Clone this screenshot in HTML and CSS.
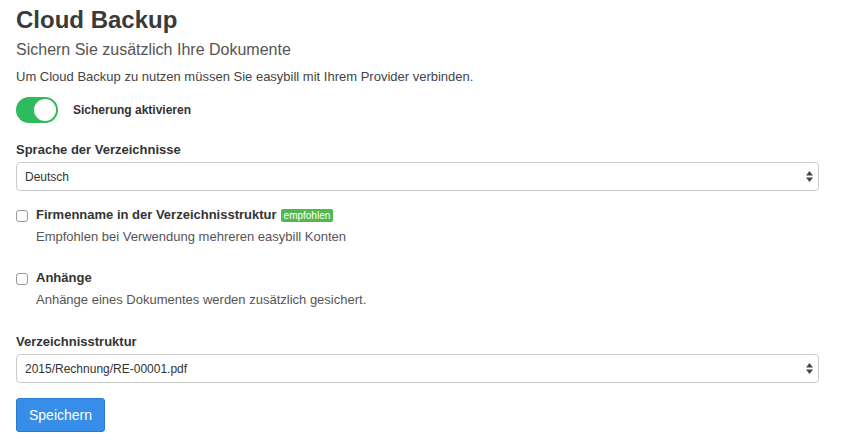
FILE: index.html
```html
<!DOCTYPE html>
<html lang="de">
<head>
<meta charset="utf-8">
<link rel="stylesheet" href="styles.css">
</head>
<body>
<div class="page">
  <h1 class="title">Cloud Backup</h1>
  <h2 class="subtitle">Sichern Sie zusätzlich Ihre Dokumente</h2>
  <p class="intro">Um Cloud Backup zu nutzen müssen Sie easybill mit Ihrem Provider verbinden.</p>

  <div class="toggle-row">
    <span class="toggle"><span class="knob"></span></span>
    <span class="toggle-label">Sicherung aktivieren</span>
  </div>

  <div class="group">
    <label class="label">Sprache der Verzeichnisse</label>
    <div class="select">
      <span>Deutsch</span>
      <svg class="arrows" width="7" height="11" viewBox="0 0 7 11"><path d="M3.5 0L7 4.5H0Z M3.5 11L0 6.5H7Z" fill="#444"/></svg>
    </div>
  </div>

  <div class="check">
    <span class="box"></span>
    <div class="check-body">
      <div class="check-label">Firmenname in der Verzeichnisstruktur <span class="badge">empfohlen</span></div>
      <div class="help">Empfohlen bei Verwendung mehreren easybill Konten</div>
    </div>
  </div>

  <div class="check">
    <span class="box"></span>
    <div class="check-body">
      <div class="check-label">Anhänge</div>
      <div class="help">Anhänge eines Dokumentes werden zusätzlich gesichert.</div>
    </div>
  </div>

  <div class="group group-last">
    <label class="label">Verzeichnisstruktur</label>
    <div class="select">
      <span>2015/Rechnung/RE-00001.pdf</span>
      <svg class="arrows" width="7" height="11" viewBox="0 0 7 11"><path d="M3.5 0L7 4.5H0Z M3.5 11L0 6.5H7Z" fill="#444"/></svg>
    </div>
  </div>

  <button class="btn">Speichern</button>
</div>
</body>
</html>
```
FILE: styles.css
```css
* { box-sizing: border-box; }
html, body { margin: 0; padding: 0; background: #fff; }
body { font-family: "Liberation Sans", Arial, sans-serif; color: #333; }
.page { padding: 4px 35px 0 16px; }
.title { font-size: 24px; font-weight: bold; color: #3a3a3a; margin: 0; line-height: 32px; }
.subtitle { font-size: 16px; font-weight: normal; color: #555; margin: 4px 0 0; line-height: 20px; }
.intro { font-size: 13px; color: #444; margin: 8px 0 0; line-height: 18px; }
.toggle-row { display: flex; align-items: center; margin-top: 11px; height: 26px; }
.toggle { width: 42px; height: 26px; border-radius: 13px; background: #2dbb5d; display: flex; justify-content: flex-end; align-items: center; padding: 2px; }
.knob { width: 22px; height: 22px; border-radius: 50%; background: #fff; }
.toggle-label { margin-left: 15px; font-size: 12px; font-weight: bold; color: #333; }
.group { margin-top: 19px; }
.label { display: block; font-size: 13px; font-weight: bold; color: #333; line-height: 16px; margin-bottom: 4px; }
.select { height: 29px; border: 1px solid #ccc; border-radius: 4px; display: flex; align-items: center; justify-content: space-between; padding: 0 4px 0 8px; font-size: 12px; color: #333; }
.arrows { margin-right: 1px; }
.check { display: flex; margin-top: 15px; }
.check + .check { margin-top: 23px; }
.box { width: 12px; height: 12px; border: 1px solid #999; border-radius: 3px; margin-top: 4px; flex: none; background: #fff; }
.check-body { margin-left: 8px; }
.check-label { font-size: 13px; font-weight: bold; color: #333; line-height: 18px; display: flex; align-items: center; }
.badge { display: inline-block; background: #4fb84f; color: #fff; font-size: 10px; font-weight: normal; line-height: 13px; padding: 0 3px; border-radius: 2px; margin-left: 4px; }
.help { font-size: 13px; color: #555; line-height: 18px; margin-top: 4px; }
.group-last { margin-top: 25px; }
.btn { margin-top: 15px; width: 89px; height: 34px; background: #368ee8; border: 1px solid #2b7bd0; border-radius: 3px; color: #fff; font-family: "Liberation Sans", Arial, sans-serif; font-size: 14px; font-weight: 500; padding: 0; }
```
